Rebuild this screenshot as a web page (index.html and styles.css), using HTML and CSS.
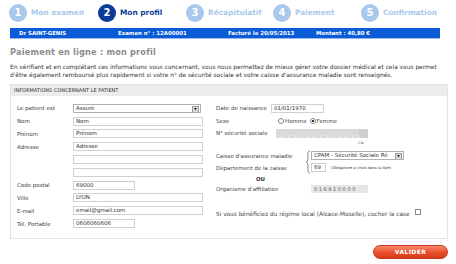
FILE: index.html
```html
<!DOCTYPE html>
<html lang="fr">
<head>
    <meta charset="UTF-8">
    <title>Paiement en ligne : mon profil</title>
    <link rel="stylesheet" href="styles.css">
</head>
<body>
    <div class="page">
        <ol class="steps">
            <li class="step"><span class="num">1</span>Mon examen</li>
            <li class="step active"><span class="num">2</span>Mon profil</li>
            <li class="step"><span class="num">3</span>Récapitulatif</li>
            <li class="step"><span class="num">4</span>Paiement</li>
            <li class="step"><span class="num">5</span>Confirmation</li>
        </ol>

        <div class="infobar">
            <span>Dr SAINT-GENIS</span>
            <span>Examen n° : 12A00001</span>
            <span>Facturé le 20/05/2013</span>
            <span>Montant : 40,80 €</span>
        </div>

        <h1>Paiement en ligne : mon profil</h1>
        <p class="intro">En vérifiant et en complétant ces informations vous concernant, vous nous permettez de mieux gérer votre dossier médical et cela vous permet d'être également remboursé plus rapidement si votre n° de sécurité sociale et votre caisse d'assurance maladie sont renseignés.</p>

        <div class="panel">
            <div class="panel-head">INFORMATIONS CONCERNANT LE PATIENT</div>
            <div class="panel-body">
                <div class="col-left">
                    <div class="row"><label>Le patient est</label><div class="select w128">Assuré<span class="arrow">▼</span></div></div>
                    <div class="row"><label>Nom</label><div class="input w130">Nom</div></div>
                    <div class="row"><label>Prénom</label><div class="input w130">Prénom</div></div>
                    <div class="row"><label>Adresse</label><div class="input w130">Adresse</div></div>
                    <div class="row"><label></label><div class="input w130"></div></div>
                    <div class="row"><label></label><div class="input w130"></div></div>
                    <div class="row"><label>Code postal</label><div class="input w62">69000</div></div>
                    <div class="row"><label>Ville</label><div class="input w130">LYON</div></div>
                    <div class="row"><label>E-mail</label><div class="input w130">email@gmail.com</div></div>
                    <div class="row"><label>Tél. Portable</label><div class="input w62">0606060606</div></div>
                </div>

                <div class="col-right">
                    <div class="rrow"><label class="l55">Date de naissance</label><div class="input w53">01/01/1970</div></div>
                    <div class="rrow"><label class="l60">Sexe</label>
                        <span class="radio"></span><span class="opt">Homme</span>
                        <span class="radio checked"></span><span class="opt">Femme</span>
                    </div>
                    <div class="rrow"><label class="l60">N° sécurité sociale</label>
                        <div class="ss">
                            <span></span><span></span><span></span><span></span><span></span><span></span><span></span><span></span><span></span><span></span><span></span><span></span><span></span><span class="key"></span>
                        </div>
                    </div>
                    <div class="cle-row"><span>Clé</span></div>

                    <div class="caisse">
                        <div class="caisse-labels">
                            <label>Caisse d'assurance maladie</label>
                            <label>Département de la caisse</label>
                        </div>
                        <svg class="brace" width="6" height="24" viewBox="0 0 6 24">
                            <path d="M5 1 C2 1 3 5 3 8 C3 11 2 12 1 12 C2 12 3 13 3 16 C3 19 2 23 5 23" fill="none" stroke="#555" stroke-width="0.7"/>
                        </svg>
                        <div class="caisse-fields">
                            <div class="rrow"><div class="select w93">CPAM - Sécurité Sociale Ré<span class="arrow">▼</span></div></div>
                            <div class="rrow"><div class="input w15">69</div><span class="hint">(Obligatoire si choix dans la liste)</span></div>
                        </div>
                    </div>
                    <div class="ou">OU</div>
                    <div class="org-row"><label class="l95">Organisme d'affiliation</label><div class="org">0 1 6 9 1 0 0 0 0</div></div>
                    <div class="local">Si vous bénéficiez du régime local (Alsace-Moselle), cocher la case <span class="check"></span></div>
                </div>
            </div>
        </div>

        <div class="actions">
            <button class="btn">VALIDER</button>
        </div>
    </div>
</body>
</html>
```

FILE: styles.css
```css
body {
    margin: 0;
    font-family: "DejaVu Sans", Verdana, sans-serif;
    background-color: #fff;
    color: #333;
}

.page {
    width: 456px;
    padding-top: 3px;
}

/* steps */
.steps {
    display: grid;
    grid-template-columns: 89px 88px 87px 88px 88px;
    margin: 0;
    padding: 0 0 0 9px;
    list-style: none;
    height: 19px;
}

.step {
    display: flex;
    align-items: center;
    gap: 4px;
    font-size: 7.4px;
    font-weight: bold;
    color: #a9c8ec;
}

.num {
    display: flex;
    align-items: center;
    justify-content: center;
    width: 18px;
    height: 18px;
    border-radius: 50%;
    background-color: #a9c8ec;
    color: #fff;
    font-size: 10px;
}

.step.active {
    color: #0b3c99;
}

.step.active .num {
    background-color: #0b3c99;
}

/* blue bar */
.infobar {
    display: grid;
    grid-template-columns: 99px 110px 88px auto;
    align-items: center;
    margin: 6px 0 0 10px;
    width: 430px;
    height: 11px;
    padding-left: 9px;
    box-sizing: border-box;
    background-color: #0a5bd6;
    border-bottom: 1px solid #9dbbe6;
    color: #fff;
    font-size: 5.4px;
    font-weight: bold;
}

h1 {
    margin: 8px 0 0 10px;
    font-size: 8.2px;
    line-height: 10px;
    color: #8c8c8c;
    letter-spacing: 0.2px;
}

.intro {
    width: 432px;
    margin: 6px 0 0 10px;
    font-size: 5.9px;
    line-height: 8px;
    color: #333;
}

/* panel */
.panel {
    margin: 5px 0 0 10px;
    width: 438px;
    border: 1px solid #e2e2e2;
    box-sizing: border-box;
}

.panel-head {
    height: 11px;
    padding-left: 3px;
    background-color: #ececec;
    font-size: 5px;
    line-height: 11px;
    color: #333;
}

.panel-body {
    display: flex;
    padding: 6px 0 8px 6px;
    font-size: 5.5px;
    color: #444;
}

.col-left {
    width: 199px;
}

.row {
    display: flex;
    align-items: center;
    height: 12.8px;
}

.row label {
    width: 56px;
}

.input, .select {
    position: relative;
    height: 9px;
    box-sizing: border-box;
    border: 1px solid #d0d0d0;
    padding-left: 2px;
    line-height: 7px;
    font-size: 5.5px;
    color: #333;
    background-color: #fff;
    white-space: nowrap;
    overflow: hidden;
}

.select {
    border-color: #b0b0b0;
}

.arrow {
    position: absolute;
    right: 1px;
    top: 1px;
    width: 5px;
    height: 5px;
    background-color: #ddd;
    border: 1px solid #999;
    font-size: 3px;
    line-height: 5px;
    text-align: center;
    color: #000;
}

.w128 { width: 128px; }
.w130 { width: 130px; }
.w62 { width: 62px; }
.w53 { width: 53px; }
.w93 { width: 93px; }
.w15 { width: 15px; }

/* right column */
.col-right {
    width: 225px;
}

.rrow {
    display: flex;
    align-items: center;
    height: 12.5px;
}

.l55 { width: 55px; }
.l60 { width: 60px; }
.l95 { width: 95px; }

.radio {
    width: 4px;
    height: 4px;
    margin: 0 1px 0 2px;
    border: 1px solid #888;
    border-radius: 50%;
    background-color: #fff;
}

.radio.checked {
    background: radial-gradient(circle, #333 40%, #fff 50%);
}

.opt {
    margin-right: 1px;
}

.ss {
    display: flex;
    align-items: flex-end;
    width: 92px;
    height: 9px;
    background-color: #d9d9d9;
}

.ss span {
    flex: 1;
    height: 3px;
    border-right: 1px solid #f0f0f0;
}

.ss span.key {
    flex: 1.6;
    height: 9px;
    background-color: #cfcfcf;
    border-right: none;
}

.cle-row {
    height: 10px;
    padding-left: 142px;
    font-size: 3.5px;
    line-height: 6px;
    color: #555;
}

.caisse {
    display: flex;
}

.caisse-labels {
    width: 89px;
}

.caisse-labels label {
    display: block;
    height: 12px;
    line-height: 12px;
}

.caisse-fields .rrow {
    height: 12px;
}

.hint {
    margin-left: 5px;
    font-size: 3.6px;
    color: #333;
}

.ou {
    width: 89px;
    height: 11px;
    line-height: 11px;
    text-align: center;
    font-weight: bold;
    color: #333;
}

.org-row {
    display: flex;
    align-items: center;
    height: 9px;
}

.org {
    width: 57px;
    height: 8px;
    padding-left: 3px;
    box-sizing: border-box;
    background-color: #e6e6e6;
    font-size: 5px;
    line-height: 8px;
    color: #555;
}

.local {
    display: flex;
    align-items: center;
    margin-top: 15px;
    height: 10px;
    font-size: 5.8px;
}

.check {
    width: 4px;
    height: 4px;
    margin: -3px 0 0 5px;
    border: 1px solid #888;
    background-color: #fff;
}

/* button */
.actions {
    display: flex;
    justify-content: flex-end;
    width: 448px;
    padding-top: 6px;
}

.btn {
    width: 75px;
    height: 14px;
    padding: 0;
    border: 1px solid #c9381b;
    border-radius: 7px;
    background: linear-gradient(#f8896c, #e84e2c 55%, #d43b1b);
    color: #fff;
    font-family: "DejaVu Sans", Verdana, sans-serif;
    font-size: 6px;
    font-weight: bold;
    letter-spacing: 0.4px;
}
```
